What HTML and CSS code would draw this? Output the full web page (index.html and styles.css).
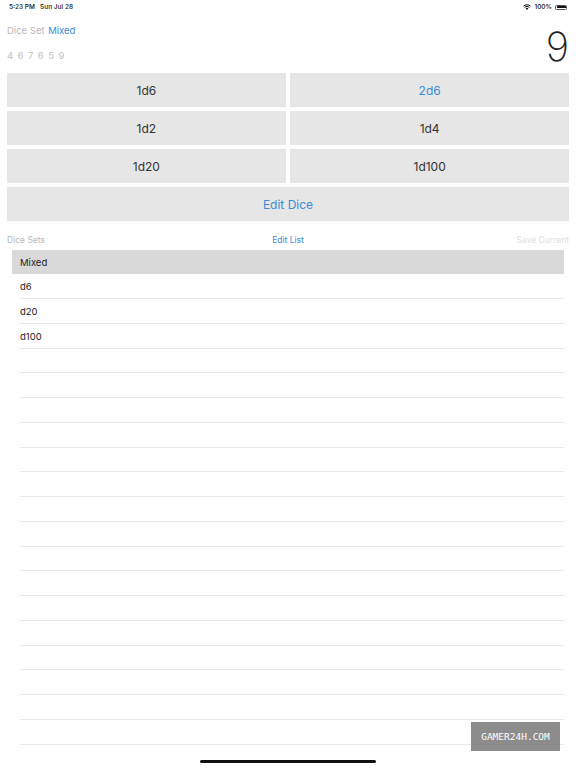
FILE: index.html
```html
<!DOCTYPE html>
<html lang="en">
<head>
  <meta charset="UTF-8">
  <title>Dice</title>
  <link rel="stylesheet" href="styles.css">
</head>
<body>
  <div class="screen">
    <div class="status">
      <span class="status-time">5:23 PM&nbsp;&nbsp;&nbsp;Sun Jul 28</span>
      <span class="status-right">
        <svg class="wifi" width="8" height="6" viewBox="0 0 8 6">
          <path d="M4 6 L2.6 4.4 A2 2 0 0 1 5.4 4.4 Z" fill="#111"/>
          <path d="M1.6 3.4 A3.4 3.4 0 0 1 6.4 3.4" stroke="#111" stroke-width="1" fill="none"/>
          <path d="M0.5 2.2 A5 5 0 0 1 7.5 2.2" stroke="#111" stroke-width="1" fill="none"/>
        </svg>
        <span>100%</span>
        <span class="battery"><span class="battery-fill"></span></span>
      </span>
    </div>

    <div class="header">
      <div class="header-left">
        <div class="set-line"><span class="muted">Dice Set</span> <span class="link set-name">Mixed</span></div>
        <div class="rolls">4 6 7 6 5 9</div>
      </div>
      <div class="total">9</div>
    </div>

    <div class="dice-grid">
      <button class="die">1d6</button>
      <button class="die active">2d6</button>
      <button class="die">1d2</button>
      <button class="die">1d4</button>
      <button class="die">1d20</button>
      <button class="die">1d100</button>
      <button class="die wide active">Edit Dice</button>
    </div>

    <div class="sets-bar">
      <span class="muted">Dice Sets</span>
      <span class="link center">Edit List</span>
      <span class="faint">Save Current</span>
    </div>

    <ul class="sets">
      <li class="selected">Mixed</li>
      <li>d6</li>
      <li>d20</li>
      <li>d100</li>
      <li></li><li></li><li></li><li></li>
      <li></li><li></li><li></li><li></li>
      <li></li><li></li><li></li><li></li>
      <li></li><li></li><li></li><li></li>
    </ul>

    <div class="watermark">GAMER24H.COM</div>
    <div class="home-bar"></div>
  </div>
</body>
</html>
```

FILE: styles.css
```css
body {
  margin: 0;
  font-family: Inter, 'Noto Sans', sans-serif;
  background-color: #fff;
  color: #333;
}

.screen {
  position: relative;
  width: 576px;
  height: 768px;
  overflow: hidden;
}

/* status bar */
.status {
  height: 14px;
  display: flex;
  align-items: center;
  justify-content: space-between;
  padding: 0 9px;
  font-size: 6.5px;
  font-weight: 500;
  color: #111;
}

.status-right {
  display: flex;
  align-items: center;
  gap: 3px;
}

.battery {
  width: 12px;
  height: 5px;
  border: 0.5px solid #555;
  border-radius: 1.5px;
  padding: 0.5px;
  box-sizing: border-box;
  display: flex;
}

.battery-fill {
  flex: 1;
  background-color: #111;
  border-radius: 0.5px;
}

/* header with the last roll */
.header {
  height: 59px;
  display: flex;
  justify-content: space-between;
  padding: 0 7px;
}

.header-left {
  padding-top: 10px;
}

.set-line {
  height: 14px;
  line-height: 14px;
  font-size: 9.5px;
}

.set-name {
  margin-left: 1px;
}

.rolls {
  margin-top: 11px;
  height: 14px;
  line-height: 14px;
  font-size: 9.5px;
  letter-spacing: 0.9px;
  color: #c2c2c2;
}

.total {
  margin-top: 13px;
  font-size: 40px;
  line-height: 40px;
  font-weight: 200;
  color: #222;
}

.muted {
  color: #b8b8b8;
}

.link {
  color: #3c8ad6;
}

.faint {
  color: #dedede;
}

/* dice buttons */
.dice-grid {
  display: grid;
  grid-template-columns: 1fr 1fr;
  grid-auto-rows: 33.5px;
  gap: 4.5px;
  padding: 0 7px;
}

.die {
  border: none;
  background-color: #e6e6e6;
  font-family: inherit;
  font-size: 12px;
  color: #333;
  padding: 1px 0 0;
}

.die.active {
  color: #3c8ad6;
}

.die.wide {
  grid-column: 1 / 3;
}

/* saved sets */
.sets-bar {
  display: grid;
  grid-template-columns: 1fr auto 1fr;
  padding: 13px 7px 4px;
  line-height: 12px;
  font-size: 8.5px;
}

.sets-bar .faint {
  text-align: right;
}

.sets {
  list-style: none;
  margin: 0 12px;
  padding: 0;
}

.sets li {
  height: 24.75px;
  line-height: 25px;
  padding-left: 8px;
  font-size: 9.5px;
  color: #222;
  background-image: linear-gradient(#e9e9e9, #e9e9e9);
  background-size: calc(100% - 8px) 1px;
  background-position: right bottom;
  background-repeat: no-repeat;
  box-sizing: border-box;
}

.sets li.selected {
  background-color: #d9d9d9;
  background-image: none;
}

.watermark {
  position: absolute;
  left: 471px;
  top: 722px;
  width: 89px;
  height: 29px;
  line-height: 29px;
  text-align: center;
  background-color: rgba(128, 128, 128, 0.9);
  color: #fff;
  font-family: 'DejaVu Sans Mono', monospace;
  font-size: 9.5px;
}

.home-bar {
  position: absolute;
  left: 200px;
  bottom: 5px;
  width: 176px;
  height: 3px;
  border-radius: 2px;
  background-color: #111;
}
```
